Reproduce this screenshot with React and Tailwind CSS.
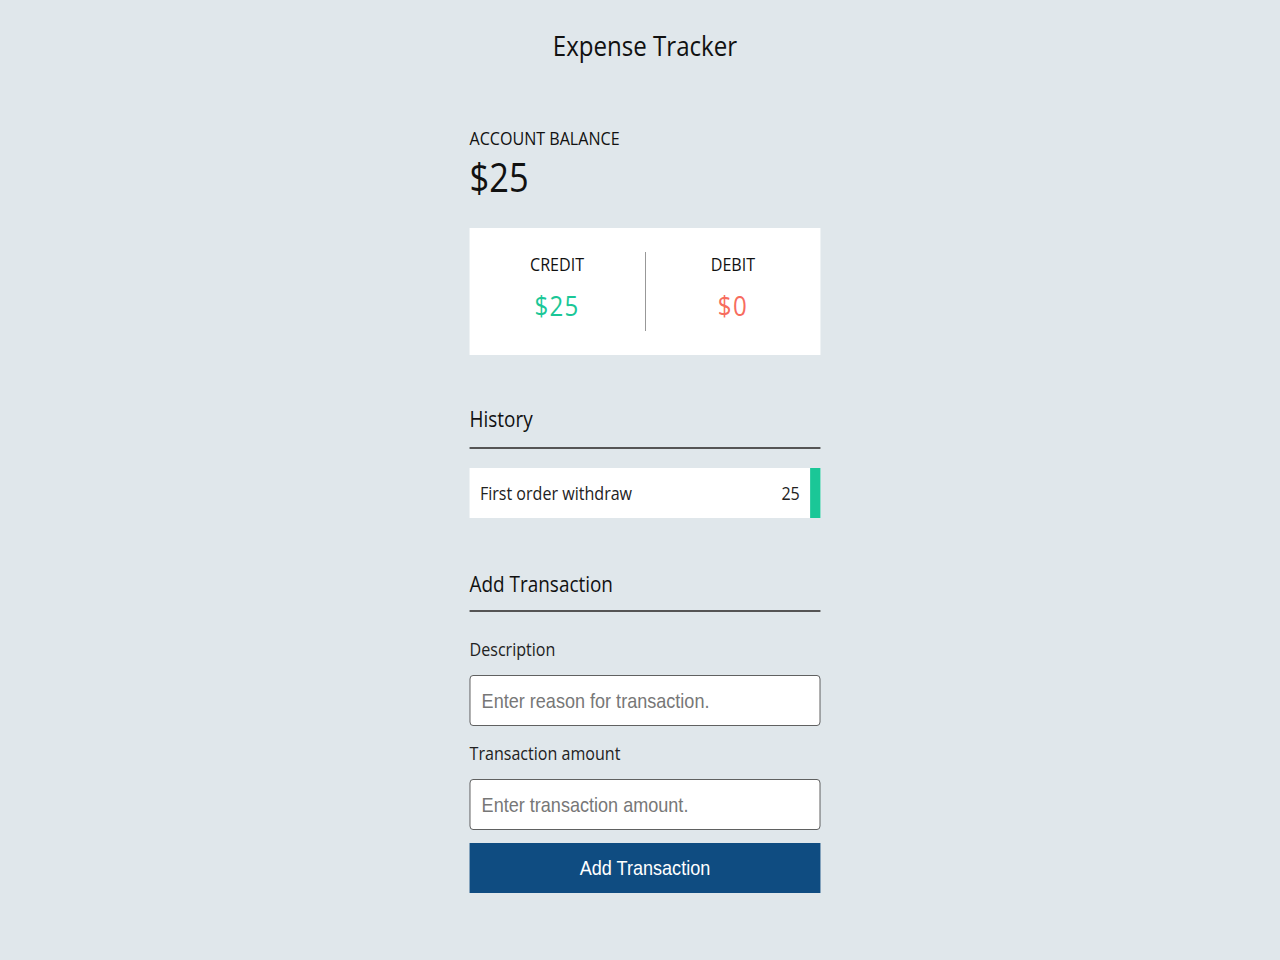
import React from 'react'

// the reference is drawn narrow: the column is laid out at 408px and squeezed to 351px
const App = () => {
  return (
    <div className="min-h-screen w-full bg-[#e0e7eb] pl-[9px] flex justify-center font-['Open_Sans',sans-serif] text-[#111]">
      <div className="w-[408px] shrink-0 scale-x-[0.86] pt-[25px]">
        <h1 className="text-center text-[28px] leading-[40px] font-normal">Expense Tracker</h1>

        <div className="mt-[61px]">
          <h4 className="text-[18.7px] leading-[24px] uppercase">Account Balance</h4>
          <h2 className="mt-[2px] text-[40px] leading-[50px] font-medium">$25</h2>
        </div>

        <div className="mt-[26px] bg-white h-[127px] flex items-start pt-[24px]">
          <div className="flex-1 flex flex-col items-center">
            <h4 className="text-[18.7px] leading-[24px] uppercase">Credit</h4>
            <p className="text-[28px] leading-[36px] mt-[11px] text-[#1ac797] tracking-[1.5px]">$25</p>
          </div>
          <div className="w-px h-[79px] bg-[#888]" />
          <div className="flex-1 flex flex-col items-center">
            <h4 className="text-[18.7px] leading-[24px] uppercase">Debit</h4>
            <p className="text-[28px] leading-[36px] mt-[11px] text-[#f76c5e] tracking-[1.5px]">$0</p>
          </div>
        </div>

        <h3 className="mt-[48px] text-[22px] leading-[30px] pb-[14px] border-b-2 border-[#555]">History</h3>
        <ul className="mt-[19px]">
          <li className="bg-white h-[50px] flex items-center justify-between pl-[12px] border-r-[12px] border-[#1ac797] text-[#222]">
            <span className="text-[18.7px]">First order withdraw</span>
            <span className="text-[18.7px] pr-[12px]">25</span>
          </li>
        </ul>

        <h3 className="mt-[50px] text-[22px] leading-[30px] pb-[12px] border-b-2 border-[#555]">Add Transaction</h3>
        <form className="mt-[24px]">
          <label className="block text-[18.7px] leading-[26px] text-[#222]">Description</label>
          <input
            type="text"
            placeholder="Enter reason for transaction."
            className="block mt-[13px] w-full h-[51px] bg-white border border-[#555] rounded-[4px] px-[13px] text-[21px] font-['Liberation_Sans',sans-serif] placeholder:text-[#777] outline-none"
          />
          <label className="block mt-[14px] text-[18.7px] leading-[26px] text-[#222]">Transaction amount</label>
          <input
            type="number"
            placeholder="Enter transaction amount."
            className="block mt-[13px] w-full h-[51px] bg-white border border-[#555] rounded-[4px] px-[13px] text-[21px] font-['Liberation_Sans',sans-serif] placeholder:text-[#777] outline-none"
          />
          <button
            type="button"
            className="block mt-[13px] w-full h-[50px] bg-[#0f4c81] text-white text-[21px] font-['Liberation_Sans',sans-serif]"
          >
            Add Transaction
          </button>
        </form>
      </div>
    </div>
  )
}

export default App
